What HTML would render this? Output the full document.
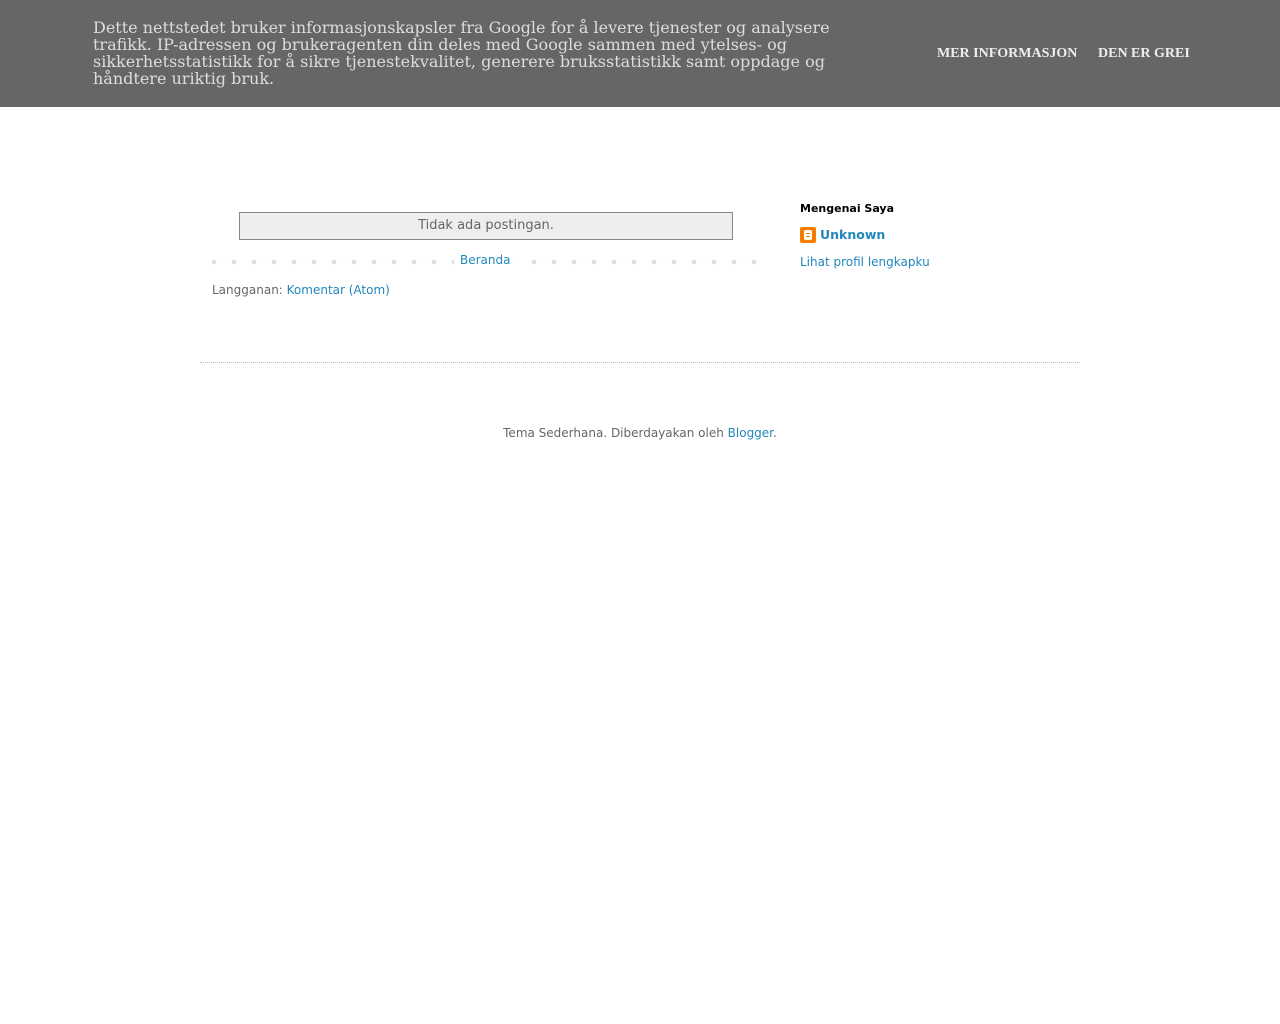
<!DOCTYPE html>
<html><head><meta charset="utf-8"><style>
body{margin:0;background:#fff;font-family:"DejaVu Sans",sans-serif;}
#cb{position:absolute;left:0;top:0;width:1280px;height:107px;background:#666;}
#cb .t{position:absolute;left:93px;top:19px;width:760px;font-family:"DejaVu Serif",serif;font-size:16px;line-height:17px;color:#ddd;}
#cb .b{position:absolute;top:46px;font-family:"Liberation Serif",serif;font-weight:bold;font-size:14px;color:#eee;}
a{color:#2288bb;text-decoration:none}
.box{position:absolute;left:239px;top:212px;width:492px;height:26px;border:1px solid #888;background:#eee;text-align:center;font-size:13px;line-height:26px;color:#666;}
.dots{position:absolute;left:212px;top:257px;width:545px;height:10px;background-image:radial-gradient(circle,#ddd 2px,transparent 2.5px);background-size:20px 10px;background-position:-8px 0;}
.ber{position:absolute;left:454px;top:253px;background:#fff;padding:0 6px;font-size:12px;}
</style></head><body>
<div id="cb"><div class="t">Dette nettstedet bruker informasjonskapsler fra Google for å levere tjenester og analysere trafikk. IP-adressen og brukeragenten din deles med Google sammen med ytelses- og sikkerhetsstatistikk for å sikre tjenestekvalitet, generere bruksstatistikk samt oppdage og håndtere uriktig bruk.</div>
<div class="b" style="left:937px">MER INFORMASJON</div><div class="b" style="left:1098px">DEN ER GREI</div></div>
<div class="box">Tidak ada postingan.</div>
<div class="dots"></div>
<div class="ber"><a>Beranda</a></div>
<div style="position:absolute;left:212px;top:283px;font-size:12px;color:#666">Langganan: <a>Komentar (Atom)</a></div>
<div style="position:absolute;left:800px;top:202px;font-size:11px;font-weight:bold;color:#000">Mengenai Saya</div>
<div style="position:absolute;left:800px;top:227px;width:16px;height:16px;background:#f57d00;border-radius:2px"><div style="position:absolute;left:4px;top:3px;width:8px;height:10px;background:#fff;border-radius:2px"></div><div style="position:absolute;left:6px;top:6px;width:4px;height:1px;background:#f57d00"></div><div style="position:absolute;left:6px;top:9px;width:4px;height:1px;background:#f57d00"></div></div>
<div style="position:absolute;left:820px;top:227px;font-size:12.5px;font-weight:bold"><a>Unknown</a></div>
<div style="position:absolute;left:800px;top:255px;font-size:12px"><a>Lihat profil lengkapku</a></div>
<div style="position:absolute;left:200px;top:362px;width:880px;border-top:1px dotted #bbb"></div>
<div style="position:absolute;left:0;width:1280px;top:426px;text-align:center;font-size:12px;color:#666">Tema Sederhana. Diberdayakan oleh <a>Blogger</a>.</div>
</body></html>
